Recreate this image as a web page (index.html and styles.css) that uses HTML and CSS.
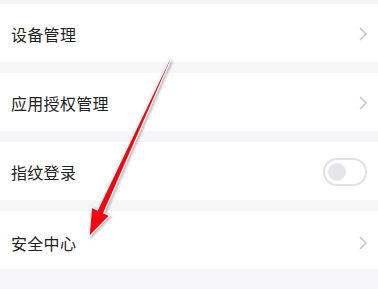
FILE: index.html
```html
<!DOCTYPE html>
<html lang="zh">
<head>
<meta charset="utf-8">
<link rel="stylesheet" href="styles.css">
</head>
<body>
<div class="page">
  <div class="list">
    <div class="row"><span class="label">设备管理</span>
      <svg class="chev" width="8" height="14" viewBox="0 0 8 14"><path d="M1 1 L7 7 L1 13" fill="none" stroke="#c4c4c6" stroke-width="1.5"/></svg>
    </div>
    <div class="row"><span class="label">应用授权管理</span>
      <svg class="chev" width="8" height="14" viewBox="0 0 8 14"><path d="M1 1 L7 7 L1 13" fill="none" stroke="#c4c4c6" stroke-width="1.5"/></svg>
    </div>
    <div class="row"><span class="label">指纹登录</span>
      <span class="toggle"><span class="knob"></span></span>
    </div>
    <div class="row row-last"><span class="label">安全中心</span>
      <svg class="chev" width="8" height="14" viewBox="0 0 8 14"><path d="M1 1 L7 7 L1 13" fill="none" stroke="#c4c4c6" stroke-width="1.5"/></svg>
    </div>
  </div>
  <svg class="arrow" width="378" height="289" viewBox="0 0 378 289">
    <polygon points="169.3,59.7 170.7,60.3 103.8,213 109.7,215.7 89,237 91.5,207.3 97.4,210" fill="#ee0a10" stroke="#ffffff" stroke-width="1.2" stroke-linejoin="miter"/>
  </svg>
</div>
</body>
</html>
```
FILE: styles.css
```css
html, body {
  margin: 0;
  padding: 0;
}
body {
  background: #f6f6f8;
  font-family: "Noto Sans CJK SC", "Noto Sans", sans-serif;
  width: 378px;
  height: 289px;
  overflow: hidden;
}
.page {
  position: relative;
  width: 378px;
  height: 289px;
}
.list {
  display: flex;
  flex-direction: column;
  gap: 11px;
  padding-top: 4px;
}
.row {
  height: 58px;
  background: #ffffff;
  display: flex;
  align-items: center;
  justify-content: space-between;
  padding: 2px 11px 0 11px;
  box-sizing: border-box;
}
.row-last {
  padding-top: 6px;
}
.label {
  font-size: 16px;
  color: #222222;
  letter-spacing: 0.3px;
}
.chev {
  display: block;
}
.toggle {
  width: 44px;
  height: 28px;
  box-sizing: border-box;
  border: 2px solid #e2e2e4;
  border-radius: 14px;
  display: flex;
  align-items: center;
  padding-left: 3px;
  background: #ffffff;
}
.knob {
  width: 18px;
  height: 18px;
  border-radius: 50%;
  background: #e6e6ea;
}
.arrow {
  position: absolute;
  left: 0;
  top: 0;
  filter: drop-shadow(1px 1px 1.5px rgba(0,0,0,0.35));
}
```
